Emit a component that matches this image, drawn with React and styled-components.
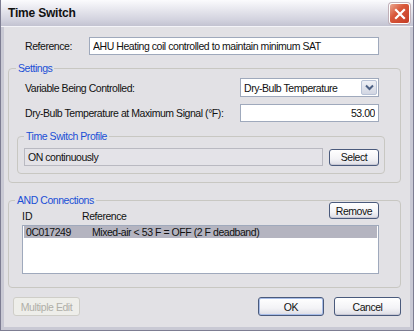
import React from 'react'
import styled, { createGlobalStyle } from 'styled-components'

const Global = createGlobalStyle`
    html, body {
        margin: 0;
        padding: 0;
        background: #ffffff;
    }
    * {
        box-sizing: border-box;
    }
`

const connections = [
    { id: '0C017249', reference: 'Mixed-air < 53 F = OFF (2 F deadband)', selected: true },
]

const App = () => {
    return (
        <>
            <Global />
            <Window>
                <TitleBar>
                    <Title>Time Switch</Title>
                    <CloseButton>
                        <svg width="12" height="12" viewBox="0 0 12 12">
                            <path d="M2 2 L10 10 M10 2 L2 10" stroke="#fff" strokeWidth="2.2" strokeLinecap="square" />
                        </svg>
                    </CloseButton>
                </TitleBar>
                <Body>
                    <Row $indent={17}>
                        <Label $width={64}>Reference:</Label>
                        <TextBox $width={290} defaultValue="AHU Heating coil controlled to maintain minimum SAT" />
                    </Row>

                    <Group $top={13} $height={115}>
                        <Legend $left={7}>Settings</Legend>
                        <Row $indent={16} $top={3}>
                            <Label $width={215}>Variable Being Controlled:</Label>
                            <Combo>
                                <ComboText>Dry-Bulb Temperature</ComboText>
                                <ComboArrow>
                                    <svg width="9" height="7" viewBox="0 0 9 7">
                                        <path d="M1 1.5 L4.5 5 L8 1.5" fill="none" stroke="#4d6185" strokeWidth="2" />
                                    </svg>
                                </ComboArrow>
                            </Combo>
                        </Row>
                        <Row $indent={16} $top={7}>
                            <Label $width={215}>Dry-Bulb Temperature at Maximum Signal (°F):</Label>
                            <TextBox $width={139} $right defaultValue="53.00" />
                        </Row>
                        <SubGroup>
                            <Legend $left={6}>Time Switch Profile</Legend>
                            <Row $indent={6} $top={5}>
                                <ReadOnlyBox>ON continuously</ReadOnlyBox>
                                <Button $width={50} $left={6}>Select</Button>
                            </Row>
                        </SubGroup>
                    </Group>

                    <Group $top={17} $height={88}>
                        <Legend $left={6}>AND Connections</Legend>
                        <HeaderRow>
                            <ColId>ID</ColId>
                            <ColRef>Reference</ColRef>
                            <Button $width={50}>Remove</Button>
                        </HeaderRow>
                        <ListBox>
                            {connections.map((c) => (
                                <ListRow key={c.id} $selected={c.selected}>
                                    <CellId>{c.id}</CellId>
                                    <span>{c.reference}</span>
                                </ListRow>
                            ))}
                        </ListBox>
                    </Group>

                    <Footer>
                        <Button $width={67} $height={19} disabled>Multiple Edit</Button>
                        <Spacer />
                        <Button $width={66} $height={19} $default>OK</Button>
                        <Button $width={67} $height={19} $left={10}>Cancel</Button>
                    </Footer>
                </Body>
            </Window>
        </>
    )
}

export default App

const Window = styled.div`
    width: 414px;
    height: 331px;
    display: flex;
    flex-direction: column;
    background: #e2e1e5;
    border: 1px solid #7d7d92;
    border-top: none;
    font-family: "Liberation Sans", Arial, sans-serif;
    font-size: 10.5px;
    color: #111;
    overflow: hidden;
`
const TitleBar = styled.div`
    height: 27px;
    flex: none;
    display: flex;
    align-items: center;
    justify-content: space-between;
    padding: 0 3px 0 7px;
    background: linear-gradient(#fbfbfd 0%, #e8e8ef 35%, #d3d3df 75%, #c3c3d1 100%);
    border-bottom: 1px solid #f4f4f8;
`
const Title = styled.div`
    font-weight: 700;
    font-size: 12px;
    color: #111;
    letter-spacing: -0.2px;
`
const CloseButton = styled.div`
    width: 21px;
    height: 21px;
    margin-top: 1px;
    border-radius: 3px;
    border: 1px solid #fff;
    background: linear-gradient(135deg, #eaa892 0%, #d9583a 40%, #c43c26 100%);
    display: flex;
    align-items: center;
    justify-content: center;
    box-shadow: 0 0 0 1px #c0b0b8;
`
const Body = styled.div`
    flex: 1;
    display: flex;
    flex-direction: column;
    padding: 10px 9px 0 4px;
    border-left: 3px solid #c9c9d4;
    border-right: 3px solid #c9c9d4;
    border-bottom: 3px solid #c9c9d4;
`
const Row = styled.div`
    display: flex;
    align-items: center;
    padding-left: ${(p) => p.$indent || 0}px;
    margin-top: ${(p) => p.$top || 0}px;
`
const Label = styled.div`
    width: ${(p) => p.$width}px;
    flex: none;
    white-space: nowrap;
    letter-spacing: -0.45px;
`
const TextBox = styled.input`
    width: ${(p) => p.$width}px;
    height: 18px;
    border: 1px solid #9fa9bc;
    background: #fff;
    font: inherit;
    letter-spacing: -0.45px;
    color: #111;
    padding: 0 3px;
    outline: none;
    text-align: ${(p) => (p.$right ? 'right' : 'left')};
`
const Group = styled.div`
    margin-top: ${(p) => p.$top}px;
    height: ${(p) => p.$height}px;
    flex: none;
    display: flex;
    flex-direction: column;
    border: 1px solid #c8c7c2;
    border-radius: 4px;
`
const SubGroup = styled.div`
    margin: 14px 0 0 8px;
    width: 368px;
    height: 38px;
    display: flex;
    flex-direction: column;
    border: 1px solid #c8c7c2;
    border-radius: 4px;
`
const Legend = styled.div`
    align-self: flex-start;
    height: 13px;
    line-height: 13px;
    margin: -7px 0 0 ${(p) => p.$left}px;
    padding: 0 2px;
    background: #e2e1e5;
    color: #1a4fd6;
    letter-spacing: -0.45px;
`
const Combo = styled.div`
    width: 139px;
    height: 19px;
    display: flex;
    align-items: stretch;
    border: 1px solid #9fa9bc;
    background: #fff;
`
const ComboText = styled.div`
    flex: 1;
    display: flex;
    align-items: center;
    padding-left: 3px;
    letter-spacing: -0.45px;
`
const ComboArrow = styled.div`
    width: 16px;
    margin: 1px;
    display: flex;
    align-items: center;
    justify-content: center;
    border: 1px solid #b8c2d6;
    border-radius: 2px;
    background: linear-gradient(#eef0f6, #d2d6e2);
`
const ReadOnlyBox = styled.div`
    width: 299px;
    height: 18px;
    display: flex;
    align-items: center;
    padding-left: 3px;
    border: 1px solid #b9b9c1;
    background: #e4e3e8;
    letter-spacing: -0.45px;
`
const Button = styled.button`
    width: ${(p) => p.$width}px;
    height: ${(p) => p.$height || 17}px;
    margin-left: ${(p) => p.$left || 0}px;
    flex: none;
    padding: 0;
    font: inherit;
    letter-spacing: -0.45px;
    color: #111;
    border: 1px solid #4a5a7c;
    border-radius: 3px;
    background: linear-gradient(#ffffff 0%, #f3f3f6 60%, #dcdce4 100%);
    box-shadow: ${(p) => (p.$default ? 'inset 0 0 0 1px #a8bde8' : 'inset 0 -1px 0 #c8c8d4')};
    &:disabled {
        color: #b0afa8;
        border-color: #cfcec8;
        background: #eeeeea;
        box-shadow: none;
    }
`
const HeaderRow = styled.div`
    display: flex;
    align-items: flex-start;
    margin-top: -5px;
    padding: 0 21px 0 13px;
`
const ColId = styled.div`
    width: 60px;
    line-height: 13px;
    margin-top: 8px;
`
const ColRef = styled.div`
    flex: 1;
    line-height: 13px;
    margin-top: 8px;
    letter-spacing: -0.45px;
`
const ListBox = styled.div`
    margin: 2px 0 0 13px;
    width: 357px;
    height: 49px;
    border: 1px solid #9fa9bc;
    background: #fff;
    padding: 0 1px;
`
const ListRow = styled.div`
    height: 12px;
    display: flex;
    align-items: center;
    padding-left: 2px;
    background: ${(p) => (p.$selected ? '#b4b4c0' : 'transparent')};
    letter-spacing: -0.45px;
`
const CellId = styled.span`
    width: 66px;
`
const Footer = styled.div`
    display: flex;
    align-items: center;
    margin-top: 9px;
    padding-left: 5px;
`
const Spacer = styled.div`
    flex: 1;
`
